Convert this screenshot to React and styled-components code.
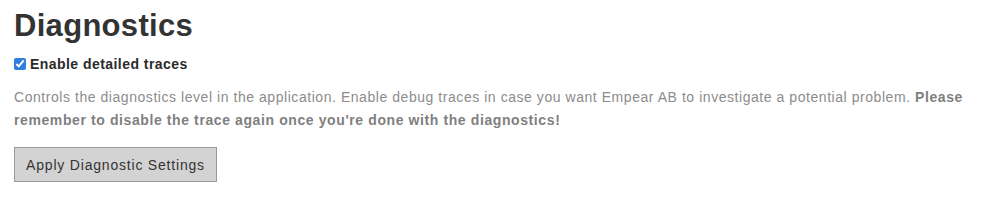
import React from 'react';
import styled, { createGlobalStyle } from 'styled-components';

const Global = createGlobalStyle`
  body {
    margin: 0;
    background: #fff;
    font-family: "Liberation Sans", Arial, sans-serif;
  }
`;

const Section = styled.section`
  padding: 6px 4px 0 14px;
`;

const Title = styled.h1`
  margin: 0;
  font-size: 31px;
  font-weight: 700;
  color: #333;
  line-height: 40px;
  letter-spacing: 0.3px;
`;

const CheckRow = styled.label`
  display: flex;
  align-items: center;
  gap: 4px;
  margin-top: 10px;
  font-size: 14px;
  font-weight: 700;
  color: #2b2b2b;
  letter-spacing: 0.45px;
`;

const Box = styled.input`
  margin: 0;
  width: 12px;
  height: 12px;
  accent-color: #2f7fe0;
`;

const Text = styled.p`
  margin: 14px 0 0 0;
  font-size: 14px;
  line-height: 23px;
  color: #8c8c8c;
  letter-spacing: 0.55px;

  strong {
    font-weight: 700;
    color: #7f7f7f;
    letter-spacing: 0.6px;
  }
`;

const Button = styled.button`
  margin-top: 15px;
  height: 35px;
  width: 203px;
  background: #d3d3d3;
  border: 1px solid #9a9a9a;
  color: #333;
  font-family: inherit;
  font-size: 14px;
  letter-spacing: 0.8px;
  padding: 0;
`;

const App = () =>
  <>
    <Global />
    <Section>
      <Title>Diagnostics</Title>
      <CheckRow>
        <Box type="checkbox" defaultChecked />
        Enable detailed traces
      </CheckRow>
      <Text>
        Controls the diagnostics level in the application. Enable debug traces in case you want Empear AB to investigate a potential problem. <strong>Please remember to disable the trace again once you're done with the diagnostics!</strong>
      </Text>
      <Button>Apply Diagnostic Settings</Button>
    </Section>
  </>
;

export default App;
